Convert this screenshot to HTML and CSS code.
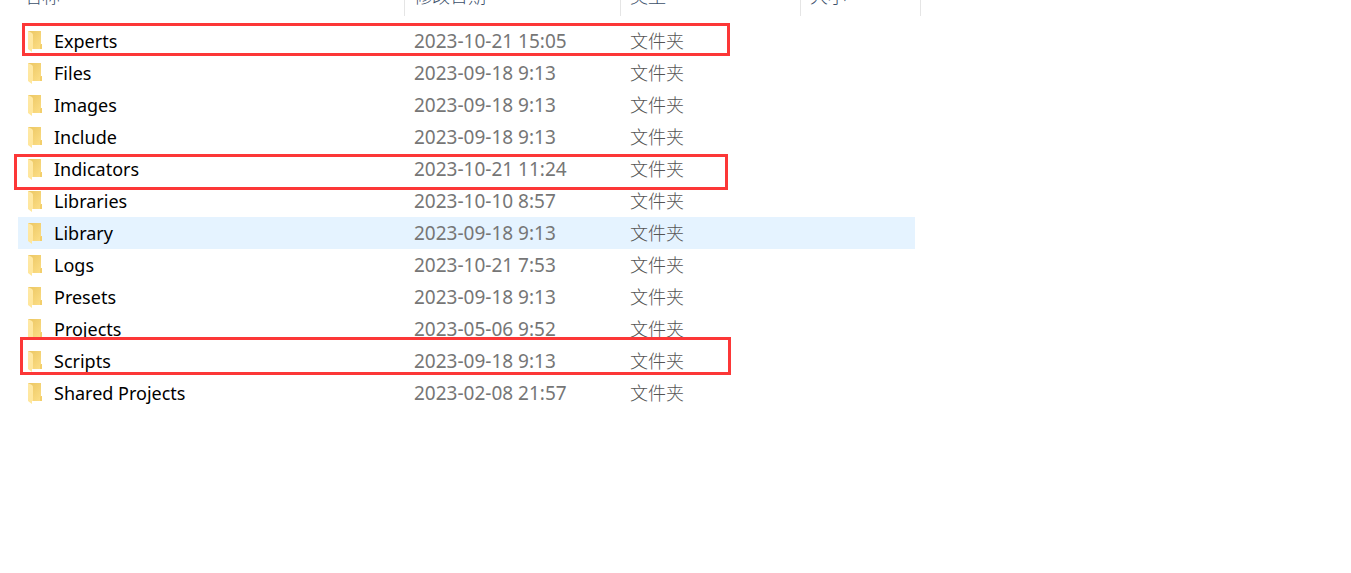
FILE: index.html
```html
<!DOCTYPE html>
<html lang="zh-CN">
<head>
  <meta charset="UTF-8" />
  <meta name="viewport" content="width=device-width, initial-scale=1.0"/>
  <title>MQL5</title>
  <link rel="stylesheet" href="styles.css">
</head>
<body>

<svg class="sprite" aria-hidden="true">
  <defs>
    <linearGradient id="back" x1="0" y1="0" x2="1" y2="1">
      <stop offset="0" stop-color="#ebc661"/>
      <stop offset="1" stop-color="#fddf88"/>
    </linearGradient>
    <linearGradient id="front" x1="0" y1="0" x2="0" y2="1">
      <stop offset="0" stop-color="#ffe9a6"/>
      <stop offset="1" stop-color="#ffe69b"/>
    </linearGradient>
    <symbol id="folder" viewBox="0 0 14 21">
      <path d="M0 0H13V13H14V18H4L0 2Z" fill="url(#back)"/>
      <path d="M13 13H14V18H12V14Z" fill="#f3cf6c"/>
      <path d="M0 0L4 2Q5 3 5 4V18H4V21L0 18Z" fill="url(#front)"/>
    </symbol>
  </defs>
</svg>

<main class="explorer">
  <table class="file-list">
    <colgroup>
      <col class="col-name">
      <col class="col-date">
      <col class="col-type">
      <col class="col-size">
    </colgroup>
    <thead>
      <tr>
        <th><div class="heading">名称</div></th>
        <th><div class="heading">修改日期</div></th>
        <th><div class="heading">类型</div></th>
        <th><div class="heading">大小</div></th>
      </tr>
    </thead>
    <tbody>
      <tr><td class="name"><svg class="icon"><use href="#folder"/></svg>Experts</td><td class="date">2023-10-21 15:05</td><td>文件夹</td><td></td></tr>
      <tr><td class="name"><svg class="icon"><use href="#folder"/></svg>Files</td><td class="date">2023-09-18 9:13</td><td>文件夹</td><td></td></tr>
      <tr><td class="name"><svg class="icon"><use href="#folder"/></svg>Images</td><td class="date">2023-09-18 9:13</td><td>文件夹</td><td></td></tr>
      <tr><td class="name"><svg class="icon"><use href="#folder"/></svg>Include</td><td class="date">2023-09-18 9:13</td><td>文件夹</td><td></td></tr>
      <tr><td class="name"><svg class="icon"><use href="#folder"/></svg>Indicators</td><td class="date">2023-10-21 11:24</td><td>文件夹</td><td></td></tr>
      <tr><td class="name"><svg class="icon"><use href="#folder"/></svg>Libraries</td><td class="date">2023-10-10 8:57</td><td>文件夹</td><td></td></tr>
      <tr class="active"><td class="name"><svg class="icon"><use href="#folder"/></svg>Library</td><td class="date">2023-09-18 9:13</td><td>文件夹</td><td></td></tr>
      <tr><td class="name"><svg class="icon"><use href="#folder"/></svg>Logs</td><td class="date">2023-10-21 7:53</td><td>文件夹</td><td></td></tr>
      <tr><td class="name"><svg class="icon"><use href="#folder"/></svg>Presets</td><td class="date">2023-09-18 9:13</td><td>文件夹</td><td></td></tr>
      <tr><td class="name"><svg class="icon"><use href="#folder"/></svg>Projects</td><td class="date">2023-05-06 9:52</td><td>文件夹</td><td></td></tr>
      <tr><td class="name"><svg class="icon"><use href="#folder"/></svg>Scripts</td><td class="date">2023-09-18 9:13</td><td>文件夹</td><td></td></tr>
      <tr><td class="name"><svg class="icon"><use href="#folder"/></svg>Shared Projects</td><td class="date">2023-02-08 21:57</td><td>文件夹</td><td></td></tr>
    </tbody>
  </table>
</main>

<div class="mark mark-experts"></div>
<div class="mark mark-indicators"></div>
<div class="mark mark-scripts"></div>

</body>
</html>
```
FILE: styles.css
```css
body {
  margin: 0;
  overflow: hidden;
  background-color: #fff;
  color: #555;
  font-family: "Noto Sans", "Noto Sans CJK SC", sans-serif;
  font-size: 18px;
}

.sprite {
  position: absolute;
  width: 0;
  height: 0;
}

/* the list is scrolled, so the top of the header row is cut off */
.explorer {
  margin-top: -20px;
  padding-left: 18px;
}

.file-list {
  width: 903px;
  max-width: 100%;
  table-layout: fixed;
  border-collapse: separate;
  border-spacing: 0;
}

.col-name {
  width: 387px;
}

.col-date {
  width: 216px;
}

.col-type {
  width: 180px;
}

.col-size {
  width: 120px;
}

th {
  padding: 0 0 9px;
  font-weight: 300;
  text-align: left;
  color: #3c506a;
}

.heading {
  height: 36px;
  padding-left: 9px;
  line-height: 32px;
  box-sizing: border-box;
  border-right: 1px solid #e5e5e5;
}

th:first-child .heading {
  padding-left: 6px;
}

td {
  height: 32px;
  padding: 0 0 0 9px;
  line-height: 32px;
  font-weight: 300;
  white-space: nowrap;
}

td:last-child {
  border-right: 6px solid transparent;
  background-clip: padding-box;
}

.name {
  padding-left: 10px;
  font-weight: 400;
  color: #000;
}

.date {
  font-size: 19px;
  font-weight: 400;
  color: #767676;
}

.icon {
  width: 14px;
  height: 21px;
  margin: 0 12px 3px 0;
  vertical-align: middle;
}

.active td {
  background-color: #e5f3ff;
}

.mark {
  position: absolute;
  box-sizing: border-box;
  border: 3px solid #fc3737;
}

.mark-experts {
  top: 23px;
  left: 22px;
  width: 708px;
  height: 33px;
}

.mark-indicators {
  top: 154px;
  left: 14px;
  width: 714px;
  height: 36px;
}

.mark-scripts {
  top: 337px;
  left: 20px;
  width: 711px;
  height: 38px;
}
```
